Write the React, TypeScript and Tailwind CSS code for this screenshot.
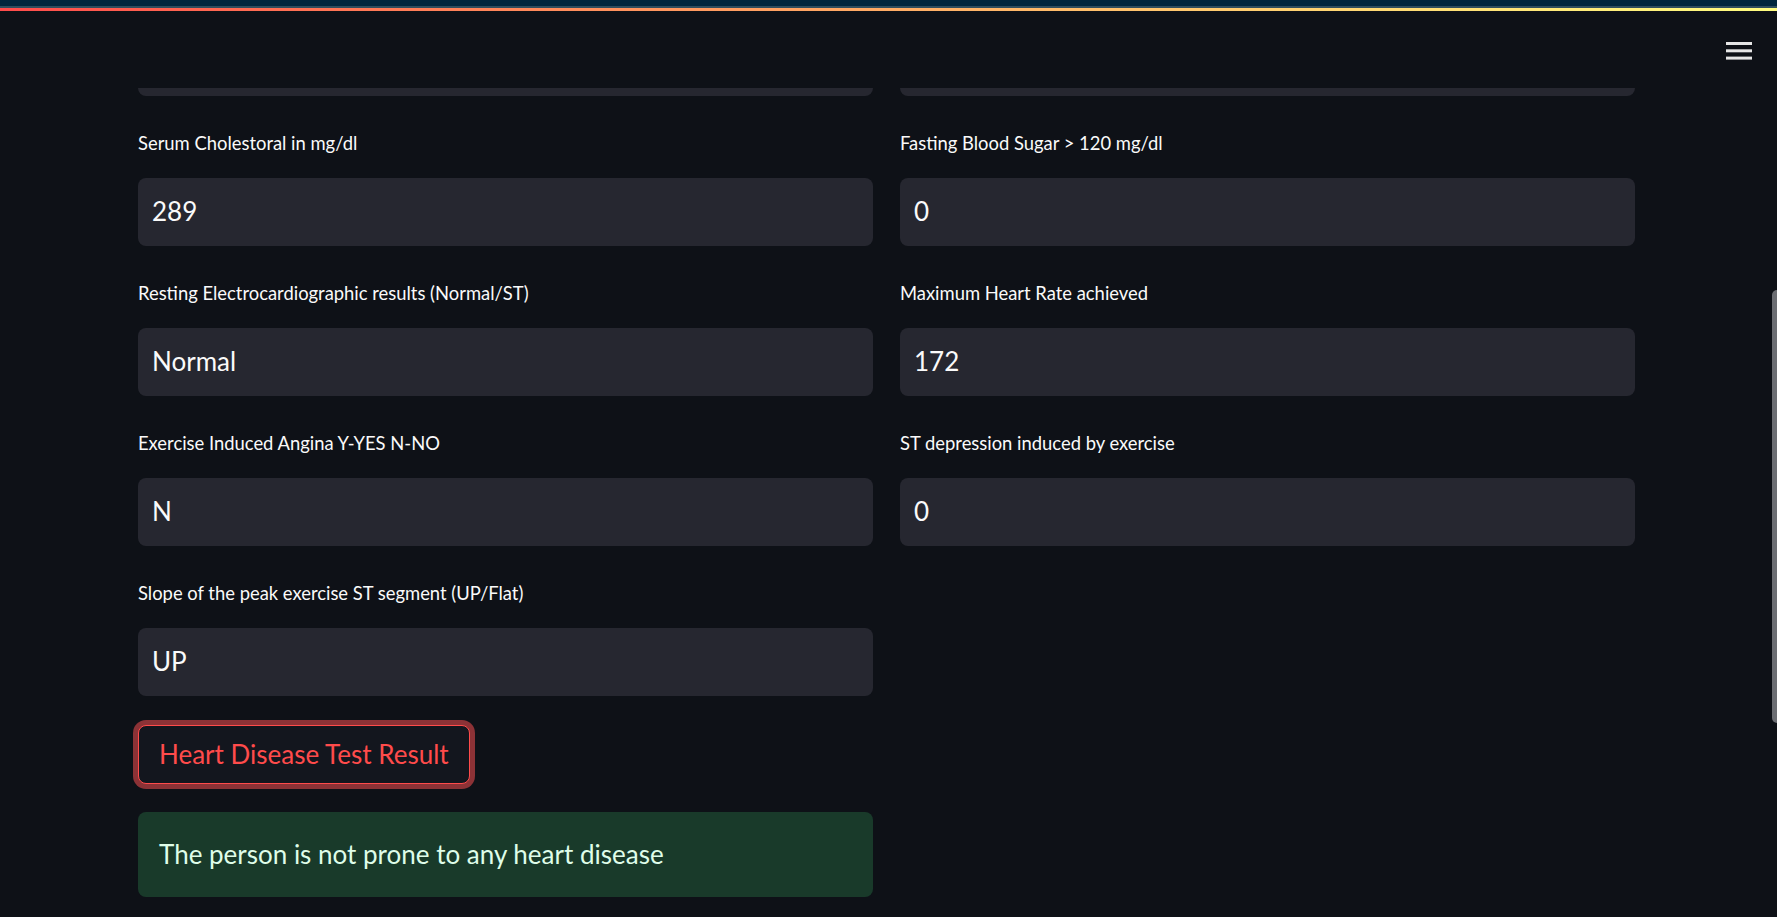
const rows = [
  [
    { label: "Serum Cholestoral in mg/dl", value: "289" },
    { label: "Fasting Blood Sugar > 120 mg/dl", value: "0" },
  ],
  [
    { label: "Resting Electrocardiographic results (Normal/ST)", value: "Normal" },
    { label: "Maximum Heart Rate achieved", value: "172" },
  ],
  [
    { label: "Exercise Induced Angina Y-YES N-NO", value: "N" },
    { label: "ST depression induced by exercise", value: "0" },
  ],
  [{ label: "Slope of the peak exercise ST segment (UP/Flat)", value: "UP" }],
];

function Field({ label, value }: { label: string; value: string }) {
  return (
    <div className="flex flex-col">
      <label className="mt-[33px] mb-[21px] h-[28px] text-[18.4px] leading-[28px] text-[#fafafa]">
        {label}
      </label>
      <div className="h-[68px] rounded-lg bg-[#262730] flex items-center px-[14px] text-[26px] leading-[1.2] text-[#fafafa]">
        {value}
      </div>
    </div>
  );
}

export default function App() {
  return (
    <div className="relative h-[917px] w-full overflow-hidden bg-[#0e1117] font-[Lato,sans-serif]">
      {/* top decoration */}
      <div className="h-[6px] bg-[#01263d]" />
      <div className="h-[2px] bg-[#2f4d5d]" />
      <div className="h-[3px] bg-gradient-to-r from-[#ff4b4b] to-[#fffd80]" />

      {/* header */}
      <header className="h-[77px] flex justify-end items-start pt-[31px] pr-[25px]">
        <svg width="26" height="18" viewBox="0 0 26 18">
          <rect x="0" y="0" width="26" height="3" fill="#e6e6e6" />
          <rect x="0" y="7.3" width="26" height="3" fill="#e6e6e6" />
          <rect x="0" y="14.6" width="26" height="3" fill="#e6e6e6" />
        </svg>
      </header>

      <main className="pl-[138px]">
        <div className="w-[1497px]">
          <div className="grid grid-cols-2 gap-x-[27px]">
            <div className="h-[8px] rounded-b-lg bg-[#262730]" />
            <div className="h-[8px] rounded-b-lg bg-[#262730]" />
          </div>

          {rows.map((row, i) => (
            <div key={i} className="grid grid-cols-2 gap-x-[27px]">
              {row.map((f) => (
                <Field key={f.label} label={f.label} value={f.value} />
              ))}
            </div>
          ))}

          <button className="mt-[29px] h-[59px] px-[20px] rounded-lg border border-[#ff4b4b] bg-[#13161e] text-[26px] leading-[1.2] text-[#ff4b4b] shadow-[0_0_0_5px_#8c3236]">
            Heart Disease Test Result
          </button>

          <div className="mt-[28px] w-[735px] h-[85px] rounded-lg bg-[#193a2a] flex items-center px-[21px] text-[26px] leading-[1.2] text-[#dffde9]">
            The person is not prone to any heart disease
          </div>
        </div>
      </main>

      {/* scrollbar thumb */}
      <div className="absolute right-0 top-[290px] w-[5px] h-[433px] rounded-l-full bg-[#6c6e73]" />
    </div>
  );
}
